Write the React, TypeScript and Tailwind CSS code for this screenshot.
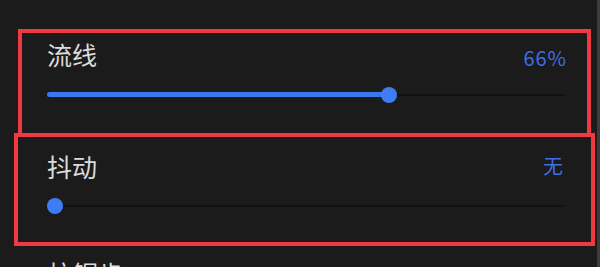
import React from "react";

const cjk = { fontFamily: '"Noto Sans CJK SC", "Noto Sans", sans-serif' };

function Slider({ value }: { value: number }) {
  return (
    <div className="relative h-4 w-[518px]">
      <div className="absolute left-0 right-0 top-[7px] h-[2px] bg-[#121212]" />
      <div
        className="absolute left-0 top-[5px] h-[5px] rounded-full bg-[#3a78f0]"
        style={{ width: `${value}%` }}
      />
      <div
        className="absolute top-0 h-4 w-4 -translate-x-1/2 rounded-full bg-[#3d7cf5]"
        style={{ left: `calc(${value}% + ${value === 0 ? 8 : 0}px)` }}
      />
    </div>
  );
}

export default function App() {
  return (
    <div
      className="h-[267px] w-[600px] overflow-hidden bg-[#1b1b1b] border-r-[3px] border-[#3c3c3c]"
      style={cjk}
    >
      {/* 流线 */}
      <div className="ml-[18px] mr-[6px] mt-[29px] h-[108px] border-[4px] border-[#ee3a40] pl-[25px] pr-[20px] pt-[6px]">
        <div className="flex items-start justify-between">
          <span className="text-[25px] leading-[30px] text-[#dcdcdc]">流线</span>
          <span className="mt-[7px] text-[20px] leading-[24px] tracking-[1px] text-[#3d6fe6]">66%</span>
        </div>
        <div className="mt-[17px]">
          <Slider value={66} />
        </div>
      </div>
      {/* 抖动 */}
      <div className="-mt-[4px] ml-[14px] mr-[2px] h-[113px] border-[4px] border-[#ee3a40] pl-[29px] pr-[28px] pt-[14px]">
        <div className="flex items-start justify-between">
          <span className="text-[25px] leading-[30px] text-[#dcdcdc]">抖动</span>
          <span className="mt-[4px] text-[20px] leading-[22px] text-[#3d6fe6]">无</span>
        </div>
        <div className="mt-[17px]">
          <Slider value={0} />
        </div>
      </div>
      <div className="ml-[48px] mt-[12px] text-[25px] leading-[30px] text-[#dcdcdc]">抗锯齿</div>
    </div>
  );
}
